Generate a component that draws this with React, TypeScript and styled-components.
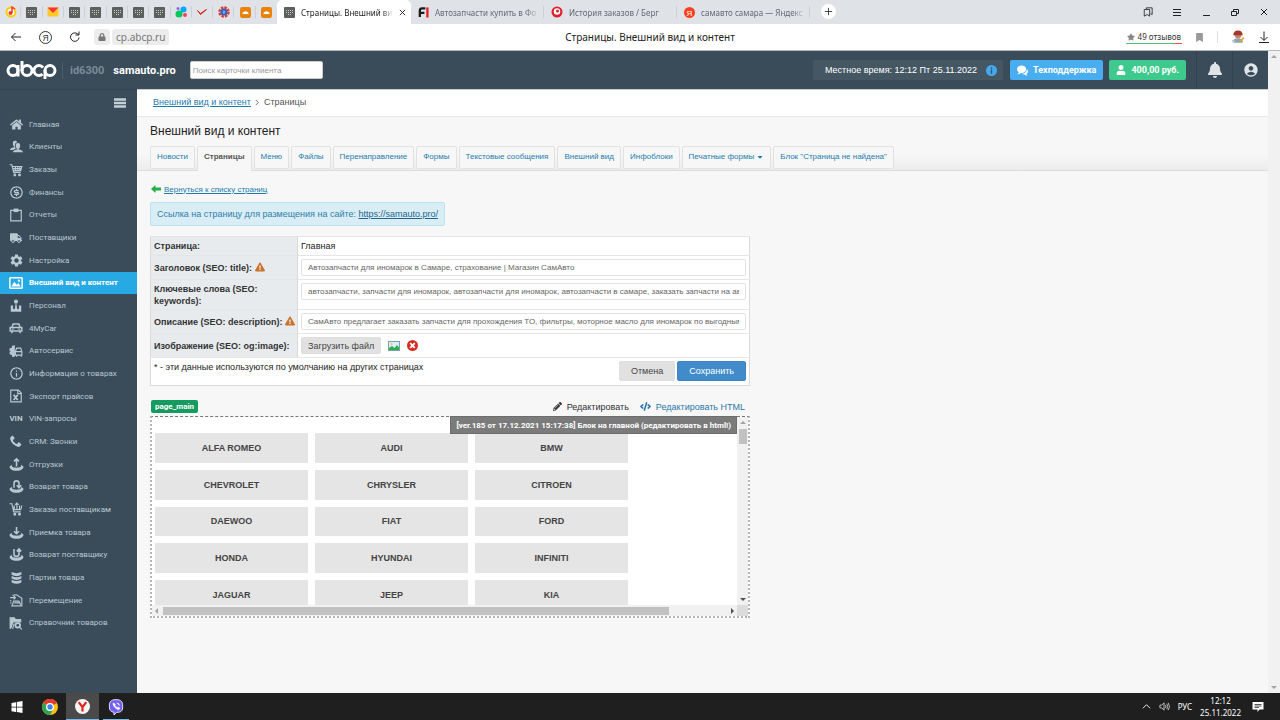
import React from "react";
import styled, { createGlobalStyle, css } from "styled-components";
import {
  FaHome, FaTruck, FaStar, FaBookmark, FaLock, FaBell, FaPencilAlt, FaCode, FaUser, FaCaretDown, FaExclamationTriangle,
} from "react-icons/fa";
import { ImUsers, ImPhone, ImBubbles2 } from "react-icons/im";
import { MdSettings, MdAccountCircle } from "react-icons/md";
import { RiMoneyDollarCircleLine, RiInformationLine } from "react-icons/ri";

const UI_FONT = `"Noto Sans", "Open Sans", sans-serif`;
const NARROW_FONT = `Roboto, "Liberation Sans", sans-serif`;
const TEXT_FONT = `"Liberation Sans", Arial, sans-serif`;

const Global = createGlobalStyle`
  *, *::before, *::after { box-sizing: border-box; }
  body { margin: 0; background: #f7f7f7; font-family: ${TEXT_FONT}; font-size: 9px; color: #222; }
  button { font: inherit; color: inherit; background: none; border: 0; padding: 0; margin: 0; }
  svg { display: block; flex: none; }
  h1, p, ul { margin: 0; padding: 0; }
  ul { list-style: none; }
`;

/* ---------- shell ---------- */

const Shell = styled.div`
  display: flex;
  flex-direction: column;
  min-height: 100vh;
`;

const TabStrip = styled.div`
  display: flex;
  height: 24px;
  background: #dfe2e7;
  font: 8px ${UI_FONT};
  color: #666a70;
`;

const PinnedTabs = styled.div`
  display: flex;
  width: 277px;
`;

const PinnedTab = styled.button`
  flex: 1;
  display: flex;
  align-items: center;
  justify-content: center;
  position: relative;
  &:not(:last-child)::after {
    content: "";
    position: absolute;
    right: 0;
    top: 6px;
    height: 12px;
    width: 1px;
    background: #cccfd4;
  }
`;

const PageTab = styled.button<{ $active?: boolean }>`
  display: flex;
  align-items: center;
  gap: 6px;
  width: 133px;
  padding: 0 5px 0 7px;
  text-align: left;
  ${(p) =>
    p.$active
      ? css`
          width: 134px;
          background: #fff;
          border-radius: 5px 5px 0 0;
          color: #222;
        `
      : css`
          background: linear-gradient(#cccfd4, #cccfd4) right center / 1px 12px no-repeat;
        `}
`;

const TabTitle = styled.span`
  flex: 1;
  min-width: 0;
  overflow: hidden;
  white-space: nowrap;
  mask-image: linear-gradient(90deg, #000 88%, transparent);
`;

const AddTab = styled.button`
  width: 15px;
  height: 15px;
  margin: 4px 0 0 11px;
  display: grid;
  place-items: center;
  border-radius: 50%;
  background: #fff;
`;

const WindowButtons = styled.div`
  display: flex;
  align-items: center;
  gap: 19px;
  margin-left: auto;
  padding-right: 11px;
  color: #222;
`;

const Toolbar = styled.div`
  display: flex;
  align-items: center;
  height: 27px;
  padding: 0 10px;
  background: #fff;
  border-bottom: 1px solid #b4b9be;
  font: 10px ${UI_FONT};
  color: #222;
`;

const ToolbarSide = styled.div<{ $end?: boolean }>`
  flex: 1;
  display: flex;
  align-items: center;
  justify-content: ${(p) => (p.$end ? "flex-end" : "flex-start")};
  gap: 13px;
`;

const NavButtons = styled.div`
  display: flex;
  align-items: center;
  gap: 17px;
`;

const Address = styled.div`
  display: flex;
  gap: 2px;
  align-items: center;
  color: #777;
`;

const Chip = styled.span`
  display: flex;
  align-items: center;
  height: 16px;
  padding: 0 4px;
  border-radius: 3px;
  background: #ececec;
`;

const WindowTitle = styled.div`
  padding-left: 20px;
`;

const Reviews = styled.a`
  display: flex;
  align-items: center;
  gap: 3px;
  height: 13px;
  padding: 0 1px;
  font-size: 8px;
  color: #333;
  text-decoration: none;
  border-bottom: 1px solid;
  border-image: linear-gradient(90deg, #4fc07a 85%, #f0524a 85%) 1;
  svg { color: #888; }
`;

const Rule = styled.span`
  width: 1px;
  height: 12px;
  background: #ddd;
`;

/* ---------- site ---------- */

const Viewport = styled.div`
  flex: 1;
  display: flex;
`;

const Site = styled.div`
  flex: 1;
  min-width: 0;
  display: flex;
  flex-direction: column;
`;

const PageScroll = styled.div`
  width: 12px;
  display: flex;
  flex-direction: column;
  justify-content: space-between;
  align-items: center;
  padding: 3px 0;
  background: #f1f1f1;
`;

const Header = styled.header`
  display: flex;
  align-items: center;
  height: 38px;
  padding-left: 6px;
  background: #3a4b59;
  color: #fff;
`;

const SiteId = styled.span`
  margin-left: 5px;
  padding: 2px 0 2px 7px;
  border-left: 1px solid #4d5e6b;
  font: bold 11px ${NARROW_FONT};
  color: #7b8d9b;
`;

const SiteName = styled.span`
  margin-left: 9px;
  font: bold 11px ${NARROW_FONT};
`;

const ClientSearch = styled.input`
  width: 133px;
  height: 18px;
  margin-left: 14px;
  padding: 0 2px;
  border: 1px solid #ccc;
  border-radius: 2px;
  font: 8px ${TEXT_FONT};
  &::placeholder { color: #999; opacity: 1; }
`;

const HeaderEnd = styled.div`
  display: flex;
  align-items: center;
  margin-left: auto;
  height: 100%;
`;

const LocalTime = styled.div`
  display: flex;
  align-items: center;
  gap: 9px;
  height: 20px;
  padding: 0 6px 0 12px;
  margin-right: 7px;
  background: #465764;
  border-radius: 2px;
`;

const HeaderButton = styled.button<{ $color: string }>`
  display: flex;
  align-items: center;
  gap: 5px;
  height: 20px;
  padding: 0 7px;
  margin-right: 6px;
  border-radius: 2px;
  background: ${(p) => p.$color};
  color: #fff;
  font: bold 9px ${NARROW_FONT};
`;

const HeaderIcon = styled.button`
  width: 36px;
  height: 100%;
  display: grid;
  place-items: center;
  border-left: 1px solid #33424f;
  color: #dfe4e8;
`;

const HeaderIcons = styled.div`
  display: flex;
  height: 100%;
  margin-left: 4px;
`;

const Columns = styled.div`
  flex: 1;
  display: flex;
`;

const Sidebar = styled.nav`
  width: 137px;
  background: #3a4b59;
  border-top: 1px solid #35444f;
`;

const Burger = styled.button`
  display: block;
  margin: 7px 11px 4px auto;
  color: #c3d0d8;
`;

const SideList = styled.ul`
  display: grid;
  grid-auto-rows: 1fr;
  height: 521px;
`;

const SideLink = styled.a<{ $active?: boolean }>`
  display: flex;
  align-items: center;
  gap: 6px;
  height: 100%;
  padding-left: 9px;
  font: 8px ${NARROW_FONT};
  color: #b9c8d1;
  text-decoration: none;
  white-space: nowrap;
  ${(p) =>
    p.$active &&
    css`
      background: #27a9e3;
      color: #fff;
      font-weight: bold;
    `}
`;

const SideIcon = styled.span`
  width: 14px;
  display: grid;
  place-items: center;
  font: bold 8px ${NARROW_FONT};
`;

const Main = styled.main`
  flex: 1;
  min-width: 0;
  background: #f7f7f7;
`;

const Breadcrumbs = styled.div`
  display: flex;
  align-items: center;
  gap: 4px;
  height: 28px;
  padding: 0 0 2px 16px;
  background: #fff;
  border-top: 1px solid #c9cdd1;
  border-bottom: 1px solid #e9e9e9;
  color: #555;
`;

const Link = styled.a`
  color: #1c7cad;
  text-decoration: underline;
`;

const SectionHead = styled.div`
  padding: 7px 13px 0;
  border-bottom: 1px solid #dcdcdc;
  background: linear-gradient(#f7f7f7 70%, #ececec);
`;

const Heading = styled.h1`
  font-size: 12px;
  line-height: 15px;
  font-weight: normal;
`;

const SectionTabs = styled.div`
  display: flex;
  align-items: flex-start;
  gap: 2px;
  height: 24px;
  margin-top: 7px;
`;

const SectionTab = styled.a<{ $active?: boolean }>`
  display: flex;
  align-items: center;
  gap: 2px;
  height: 23px;
  padding: 0 6px 2px;
  border: 1px solid #e2e2e2;
  border-radius: 2px;
  background: #f7f7f7;
  font-size: 8px;
  color: #1c7cad;
  text-decoration: none;
  white-space: nowrap;
  ${(p) =>
    p.$active &&
    css`
      height: 25px;
      padding-bottom: 5px;
      border-bottom: 0;
      border-radius: 2px 2px 0 0;
      color: #555;
      font-weight: bold;
    `}
`;

const Content = styled.div`
  max-width: 626px;
  padding: 12px 13px 0;
`;

const Back = styled.div`
  display: flex;
  align-items: center;
  gap: 3px;
  height: 12px;
  padding-left: 1px;
  font-size: 8px;
`;

const Notice = styled.div`
  width: fit-content;
  height: 24px;
  margin-top: 7px;
  padding: 0 6px;
  line-height: 22px;
  border: 1px solid #bce3ee;
  border-radius: 2px;
  background: #d9edf7;
  color: #2f7ea8;
  a { color: #1d668c; }
`;

const SeoTable = styled.table`
  width: 100%;
  margin-top: 10px;
  border-collapse: collapse;
  background: #fff;
  border: 1px solid #dadada;
`;

const Row = styled.tr<{ $h: number }>`
  height: ${(p) => p.$h}px;
  border-top: 1px solid #e6e6e6;
`;

const Label = styled.th`
  width: 147px;
  padding: 0 0 0 3px;
  border-right: 1px solid #dadada;
  background: #e7ebee;
  text-align: left;
  line-height: 12px;
  white-space: nowrap;
  color: #333;
  svg { display: inline-block; vertical-align: -1px; color: #c8722a; }
`;

const Cell = styled.td`
  padding: 3px;
  vertical-align: top;
  line-height: 12px;
`;

const Field = styled.input`
  display: block;
  width: 100%;
  height: 17px;
  padding: 0 6px 1px;
  border: 1px solid #e2e2e2;
  border-radius: 2px;
  font: 8px ${TEXT_FONT};
  color: #666;
`;

const Upload = styled.div`
  display: flex;
  align-items: center;
  gap: 7px;
`;

const Btn = styled.button<{ $primary?: boolean; $small?: boolean }>`
  height: ${(p) => (p.$small ? 17 : 20)}px;
  padding: 0 ${(p) => (p.$small ? 6 : 11)}px;
  border: 1px solid ${(p) => (p.$primary ? "#3d86c6" : "#dedede")};
  border-radius: 2px;
  background: ${(p) => (p.$primary ? "#428bca" : "#e1e1e1")};
  color: ${(p) => (p.$primary ? "#fff" : "#444")};
`;

const Footer = styled.div`
  display: flex;
  justify-content: space-between;
`;

const Actions = styled.div`
  display: flex;
  gap: 2px;
`;

const BlockBar = styled.div`
  display: flex;
  align-items: center;
  gap: 11px;
  height: 15px;
  margin-top: 13px;
  padding-right: 5px;
`;

const Tag = styled.span`
  margin-right: auto;
  margin-left: 1px;
  height: 13px;
  padding: 0 4px;
  line-height: 13px;
  border-radius: 2px;
  background: #159a60;
  color: #fff;
  font-family: ${NARROW_FONT};
  font-size: 8px;
  font-weight: bold;
`;

const EditButton = styled.button<{ $link?: boolean }>`
  display: flex;
  align-items: center;
  gap: 5px;
  color: ${(p) => (p.$link ? "#2b78a8" : "#333")};
`;

const Preview = styled.div`
  position: relative;
  display: grid;
  grid-template-columns: minmax(0, 1fr) 11px;
  grid-template-rows: 188px 11px;
  margin-top: 2px;
  border: 2px dotted #b5b5b5;
  border-top: 1px dashed #777;
  background: #fff;
`;

const VersionTip = styled.div`
  position: absolute;
  top: -1px;
  right: 11px;
  height: 18px;
  padding: 0 5px;
  line-height: 17px;
  background: #7b7b7b;
  border: 1px solid #6d6d6d;
  color: #fff;
  font-family: ${NARROW_FONT};
  font-size: 8px;
  font-weight: bold;
`;

const BrandClip = styled.div`
  overflow: hidden;
  padding: 16px 0 0 3px;
`;

const Brands = styled.div`
  display: grid;
  grid-template-columns: repeat(3, 153px);
  grid-template-rows: repeat(5, 1fr);
  gap: 7px;
  height: 177px;
`;

const Brand = styled.a`
  display: grid;
  place-items: center;
  background: #e5e5e5;
  color: #444;
  font-weight: bold;
  text-decoration: none;
`;

const ScrollTrack = styled.div<{ $vertical?: boolean }>`
  display: flex;
  flex-direction: ${(p) => (p.$vertical ? "column" : "row")};
  align-items: center;
  justify-content: space-between;
  gap: 3px;
  padding: ${(p) => (p.$vertical ? "3px 0" : "0 2px")};
  background: #f1f1f1;
`;

const Thumb = styled.span<{ $vertical?: boolean }>`
  background: #c1c1c1;
  ${(p) =>
    p.$vertical
      ? css`
          width: 8px;
          height: 15px;
          margin-bottom: auto;
        `
      : css`
          width: 506px;
          height: 8px;
          margin-right: auto;
        `}
`;

const Corner = styled.div`
  background: #dcdcdc;
`;

/* ---------- task bar ---------- */

const TaskBar = styled.footer`
  display: flex;
  align-items: center;
  height: 27px;
  background: #1f1f1f;
  color: #fff;
  font: 8px ${UI_FONT};
`;

const Task = styled.button<{ $state?: "active" | "open" }>`
  width: 33px;
  height: 100%;
  display: grid;
  place-items: center;
  background: ${(p) => (p.$state === "active" ? "#4a4a4a" : "none")};
  ${(p) =>
    p.$state &&
    css`
      background-image: linear-gradient(#76b9ed, #76b9ed);
      background-size: ${p.$state === "active" ? "100%" : "26px"} 1px;
      background-position: bottom center;
      background-repeat: no-repeat;
    `}
`;

const Tray = styled.div`
  display: flex;
  align-items: center;
  gap: 8px;
  margin-left: auto;
  padding-right: 16px;
`;

const Clock = styled.div`
  line-height: 12px;
  text-align: center;
  margin-right: 3px;
`;

/* ---------- drawings ---------- */

const Svg = ({ s = 14, box = 24, children }: { s?: number; box?: number; children: React.ReactNode }) => (
  <svg width={s} height={s} viewBox={`0 0 ${box} ${box}`} fill="none" stroke="currentColor" strokeWidth={2} aria-hidden="true">
    {children}
  </svg>
);

const Arrow = ({ dir, dim }: { dir: "up" | "down" | "left" | "right"; dim?: boolean }) => {
  const pts = { up: "0,4 3,1 6,4", down: "0,2 3,5 6,2", left: "4,0 1,3 4,6", right: "2,0 5,3 2,6" }[dir];
  return (
    <svg width="6" height="6" viewBox="0 0 6 6" aria-hidden="true">
      <polygon points={pts} fill={dim ? "#a3a3a3" : "#505050"} />
    </svg>
  );
};

const GridFav = () => (
  <svg width="11" height="11" viewBox="0 0 11 11" aria-hidden="true">
    <rect width="11" height="11" rx="1" fill="#5c5f5c" />
    <g fill="#c9ccc9">
      {[2, 4, 6, 8].map((x) => <rect key={x} x={x} y="3" width="1" height="1" />)}
      {[2, 4, 6, 8].map((x) => <rect key={x} x={x} y="5" width="1" height="1" />)}
      <rect x="4" y="7" width="1" height="1" />
      <rect x="6" y="7" width="1" height="1" />
    </g>
  </svg>
);

const MusicFav = () => (
  <Svg s={12}>
    <circle cx="12" cy="12" r="9" stroke="#ffcc00" strokeWidth="4" fill="#fff" />
    <circle cx="11" cy="14" r="4" fill="#f33" stroke="none" />
    <path d="M14 14V2l6 4" stroke="#f33" strokeWidth="3" />
  </Svg>
);

const MailFav = () => (
  <Svg s={12}>
    <rect x="1" y="3" width="22" height="18" fill="#ffc928" stroke="none" />
    <path d="M1 3h22L12 14z" fill="#f33" stroke="none" />
  </Svg>
);

const DotsFav = () => (
  <Svg s={12}>
    <circle cx="8" cy="16" r="7" fill="#04c95a" stroke="none" />
    <circle cx="17" cy="7" r="6" fill="#00aaff" stroke="none" />
    <circle cx="20" cy="18" r="4" fill="#ff4053" stroke="none" />
    <circle cx="6" cy="5" r="3" fill="#965eeb" stroke="none" />
  </Svg>
);

const CheckFav = () => (
  <Svg s={12}>
    <path d="M3 9l6 8L21 7 9 15z" fill="#d9231d" stroke="#d9231d" />
  </Svg>
);

const GearFav = () => (
  <Svg s={12}>
    <circle cx="12" cy="12" r="9" stroke="#e03a3a" strokeWidth="5" strokeDasharray="5 2" />
    <circle cx="12" cy="12" r="5" stroke="#2b62b5" strokeWidth="4" fill="#cfe0f5" />
    <path d="M8 12h8" stroke="#2b62b5" />
  </Svg>
);

const OrangeFav = () => (
  <Svg s={11}>
    <rect width="24" height="24" rx="5" fill="#e8820c" stroke="none" />
    <path d="M5 15c1-8 13-8 14 0z" fill="#fff" stroke="none" />
  </Svg>
);

const FiFav = () => (
  <Svg s={11}>
    <path d="M4 22V8q0-5 5-5h7M4 13h10" stroke="#1b1b1b" strokeWidth="5" />
    <path d="M20.500 1v22" stroke="#e31e24" strokeWidth="5" />
  </Svg>
);

const BergFav = () => (
  <Svg s={12}>
    <circle cx="12" cy="12" r="11" fill="#e3202a" stroke="none" />
    <circle cx="12" cy="11" r="6.500" fill="#fff" stroke="none" />
    <circle cx="13" cy="10" r="3" fill="#e3202a" stroke="none" />
  </Svg>
);

const YaFav = () => (
  <svg width="11" height="11" viewBox="0 0 22 22" aria-hidden="true">
    <circle cx="11" cy="11" r="11" fill="#fc3f1d" />
    <text x="11" y="17" textAnchor="middle" fontFamily="Liberation Sans" fontSize="16" fill="#fff">Я</text>
  </svg>
);

const Logo = () => (
  <svg width="51" height="19" viewBox="0 0 51 19" role="img" aria-label="abcp" fill="none" stroke="#fff" strokeWidth="3">
    <circle cx="7" cy="9.500" r="5" />
    <line x1="12" y1="4" x2="12" y2="15.500" />
    <line x1="16" y1="0" x2="16" y2="10" />
    <circle cx="21" cy="9.500" r="5" />
    <circle cx="33" cy="9.500" r="5" strokeDasharray="23.600 7.800" strokeDashoffset="-3.900" />
    <circle cx="44" cy="9.500" r="5" />
    <line x1="39" y1="9" x2="39" y2="18" />
  </svg>
);

const CartShape = () => (
  <>
    <path d="M1 3h4l3 13h12M6 6h16l-2 7H8M11 6v7M15 6v7M18.500 6v7M7 9.500h14" />
    <circle cx="10" cy="20.500" r="1.500" fill="currentColor" />
    <circle cx="18" cy="20.500" r="1.500" fill="currentColor" />
  </>
);

const TrayShape = ({ arrow }: { arrow: string }) => (
  <Svg s={15}>
    <path d="M5 12l-4 3v2c2 4 7 5 11 5s9-1 11-5v-2l-4-3c2 4-2 5-7 5s-9-1-7-5z" fill="currentColor" stroke="none" />
    <path d={arrow} strokeWidth="2.500" />
  </Svg>
);

const PictureIcon = () => (
  <Svg>
    <rect x="1.500" y="3" width="21" height="18" rx="1" strokeWidth="2.500" />
    <path d="M4 18l5-8 4 5 3-3 4 6z" fill="currentColor" stroke="none" />
    <circle cx="17" cy="8" r="2" fill="currentColor" stroke="none" />
  </Svg>
);

const MENU: { label: string; icon: React.ReactNode; active?: boolean }[] = [
  { label: "Главная", icon: <FaHome size={13} /> },
  { label: "Клиенты", icon: <ImUsers size={13} /> },
  { label: "Заказы", icon: <Svg><CartShape /></Svg> },
  { label: "Финансы", icon: <RiMoneyDollarCircleLine size={15} /> },
  {
    label: "Отчеты",
    icon: (
      <Svg>
        <path d="M3 4h18v18H3z" />
        <path d="M8 1h8v6H8z" fill="currentColor" stroke="none" />
      </Svg>
    ),
  },
  { label: "Поставщики", icon: <FaTruck size={12} /> },
  { label: "Настройка", icon: <MdSettings size={15} /> },
  { label: "Внешний вид и контент", icon: <PictureIcon />, active: true },
  {
    label: "Персонал",
    icon: (
      <Svg>
        <circle cx="12" cy="4.500" r="3.500" fill="currentColor" stroke="none" />
        <path d="M3 11h4v6h3l1-8h2l1 8h3v-6h4v11H3z" fill="currentColor" stroke="none" />
      </Svg>
    ),
  },
  {
    label: "4MyCar",
    icon: (
      <Svg>
        <path d="M5 11l2-6h10l2 6M2 11h20v6H2zM5 17v4M19 17v4" strokeWidth="2.500" />
        <path d="M5 14h3M16 14h3" />
      </Svg>
    ),
  },
  {
    label: "Автосервис",
    icon: (
      <Svg>
        <path d="M9 2v20M9 4H6v3L2 8v3h2v3H2v3l4 1v3h3" fill="currentColor" />
        <path d="M11 13l2-6h7l2 6v6H11zM13 19v3M21 19v3M11 13h11" />
      </Svg>
    ),
  },
  { label: "Информация о товарах", icon: <RiInformationLine size={15} /> },
  {
    label: "Экспорт прайсов",
    icon: (
      <Svg>
        <path d="M3 2h13l5 5v15H3zM15 2v6h6" />
        <path d="M8 10l7 9M15 10l-7 9" strokeWidth="3" />
      </Svg>
    ),
  },
  { label: "VIN-запросы", icon: "VIN" },
  { label: "CRM: Звонки", icon: <ImPhone size={12} /> },
  { label: "Отгрузки", icon: <TrayShape arrow="M12 15V3M8 7l4-4 4 4" /> },
  { label: "Возврат товара", icon: <TrayShape arrow="M8 14V7q0-4 4-4t4 4v5M12.500 10l3.500 4 3.500-4" /> },
  {
    label: "Заказы поставщикам",
    icon: (
      <Svg>
        <path d="M1 3h4l3 14h12M6 8l2 5h12l2-7M9 6v7M18 6v7M13.500 13V2M10.500 5l3-3 3 3" />
        <circle cx="10" cy="21" r="1.500" fill="currentColor" />
        <circle cx="18" cy="21" r="1.500" fill="currentColor" />
      </Svg>
    ),
  },
  { label: "Приемка товара", icon: <TrayShape arrow="M12 3v11M8 10l4 4 4-4" /> },
  { label: "Возврат поставщику", icon: <TrayShape arrow="M8 3v8q0 4 4 4t4-4V3M12.500 7L16 3l3.500 4" /> },
  {
    label: "Партии товара",
    icon: (
      <Svg s={13}>
        <path d="M3 2q9 4 18 0v5q-9 5-18 0zM3 9q9 5 18 0v5q-9 5-18 0zM3 16q9 5 18 0v5q-9 5-18 0z" fill="currentColor" stroke="none" />
      </Svg>
    ),
  },
  {
    label: "Перемещение",
    icon: (
      <Svg>
        <path d="M2 8h9M8 5l3 3-3 3" />
        <path d="M3 12v2M3 16v2M6 4l7-1 9 6v13H5l3-8h9l3 6M9 17h9" />
      </Svg>
    ),
  },
  {
    label: "Справочник товаров",
    icon: (
      <Svg>
        <path d="M2 3h7l2 3h9v4H7L3 21H2z" fill="currentColor" />
        <circle cx="15" cy="16" r="4" strokeWidth="3" />
        <path d="M18 19l4 4M6 22l3-9" />
      </Svg>
    ),
  },
];

const PINNED: [string, React.ReactNode][] = [
  ["Музыка", <MusicFav />], ["ABCP 1", <GridFav />], ["Почта", <MailFav />], ["ABCP 2", <GridFav />],
  ["ABCP 3", <GridFav />], ["ABCP 4", <GridFav />], ["ABCP 5", <GridFav />], ["ABCP 6", <GridFav />],
  ["Объявления", <DotsFav />], ["Проверка", <CheckFav />], ["Запчасти", <GearFav />],
  ["Облако 1", <OrangeFav />], ["Облако 2", <OrangeFav />],
];

const SECTIONS = [
  "Новости", "Страницы", "Меню", "Файлы", "Перенаправление", "Формы", "Текстовые сообщения",
  "Внешний вид", "Инфоблоки", "Печатные формы", 'Блок "Страница не найдена"',
];

const BRANDS = [
  "ALFA ROMEO", "AUDI", "BMW", "CHEVROLET", "CHRYSLER", "CITROEN", "DAEWOO", "FIAT", "FORD",
  "HONDA", "HYUNDAI", "INFINITI", "JAGUAR", "JEEP", "KIA",
];

/* ---------- page parts ---------- */

const BrowserChrome = () => (
  <>
    <TabStrip>
      <PinnedTabs>
        {PINNED.map(([name, icon]) => (
          <PinnedTab key={name} aria-label={name}>{icon}</PinnedTab>
        ))}
      </PinnedTabs>
      <PageTab $active>
        <GridFav />
        <TabTitle>Страницы. Внешний ви</TabTitle>
        <Svg s={7} box={8}><path d="M1 1l6 6M7 1L1 7" strokeWidth="1" /></Svg>
      </PageTab>
      <PageTab><FiFav /><TabTitle>Автозапчасти купить в Фо</TabTitle></PageTab>
      <PageTab><BergFav /><TabTitle>История заказов / Берг</TabTitle></PageTab>
      <PageTab><YaFav /><TabTitle>самавто самара — Яндекс</TabTitle></PageTab>
      <AddTab aria-label="Новая вкладка">
        <Svg s={9} box={10}><path d="M5 1v8M1 5h8" stroke="#333" strokeWidth="1" /></Svg>
      </AddTab>
      <WindowButtons>
        <button aria-label="Коллекции">
          <Svg s={10}><path d="M8 5V2h14v16l-4-2M3 6h13v16l-6-4-7 4z" /></Svg>
        </button>
        <button aria-label="Меню браузера"><Svg s={10} box={10}><path d="M1 2.500h8M1 5.500h8M1 8.500h8" strokeWidth="1" /></Svg></button>
        <button aria-label="Свернуть"><Svg s={10} box={10}><path d="M2 8.500h7" strokeWidth="1" /></Svg></button>
        <button aria-label="Развернуть"><Svg s={10} box={10}><path d="M1.500 4.500h5v4h-5zM3.500 4V2.500h5v4H7" strokeWidth="1" /></Svg></button>
        <button aria-label="Закрыть"><Svg s={10} box={10}><path d="M2 2l6 6M8 2L2 8" strokeWidth="1" /></Svg></button>
      </WindowButtons>
    </TabStrip>
    <Toolbar>
      <ToolbarSide>
        <NavButtons>
          <button aria-label="Назад"><Svg s={12}><path d="M22 12H3M11 4l-8 8 8 8" /></Svg></button>
          <button aria-label="Яндекс">
            <svg width="13" height="13" viewBox="0 0 26 26" aria-hidden="true">
              <circle cx="13" cy="13" r="12" fill="none" stroke="#333" strokeWidth="2" />
              <text x="13" y="19" textAnchor="middle" fontFamily="Liberation Sans" fontSize="17" fill="#333">Я</text>
            </svg>
          </button>
          <button aria-label="Обновить"><Svg s={12}><path d="M20 13a8.500 8.500 0 1 1-4-8l3 2M20 1v7h-7" /></Svg></button>
        </NavButtons>
        <Address>
          <Chip><FaLock size={8} /></Chip>
          <Chip>cp.abcp.ru</Chip>
        </Address>
      </ToolbarSide>
      <WindowTitle>Страницы. Внешний вид и контент</WindowTitle>
      <ToolbarSide $end>
        <Reviews href="#"><FaStar size={8} />49 отзывов</Reviews>
        <FaBookmark size={9} color="#999" />
        <Rule />
        <button aria-label="Профиль">
          <Svg s={14}>
            <path d="M4 17c4-4 12-4 16 0v5H4z" fill="#8ea2b8" stroke="none" />
            <circle cx="12" cy="8" r="6" fill="#c9846a" stroke="none" />
            <path d="M4 9q0-8 8-8t8 8z" fill="#a8352c" stroke="none" />
            <path d="M14 21l8-8" stroke="#e2a52b" strokeWidth="3" />
            <path d="M2 18l5 3" stroke="#b8c6d6" strokeWidth="3" />
          </Svg>
        </button>
        <button aria-label="Загрузки"><Svg s={12}><path d="M12 1v17M5 12l7 7 7-7M2 23h20" /></Svg></button>
      </ToolbarSide>
    </Toolbar>
  </>
);

const SiteHeader = () => (
  <Header>
    <Logo />
    <SiteId>id6300</SiteId>
    <SiteName>samauto.pro</SiteName>
    <ClientSearch placeholder="Поиск карточки клиента" aria-label="Поиск карточки клиента" />
    <HeaderEnd>
      <LocalTime>
        Местное время: 12:12 Пт 25.11.2022
        <Svg s={11}>
          <circle cx="12" cy="12" r="12" fill="#45a9ee" stroke="none" />
          <path d="M12 5v3M12 10v9" stroke="#34526b" strokeWidth="3" />
        </Svg>
      </LocalTime>
      <HeaderButton $color="#49aef0"><ImBubbles2 size={11} />Техподдержка</HeaderButton>
      <HeaderButton $color="#3fca8d"><FaUser size={10} />400,00 руб.</HeaderButton>
      <HeaderIcons>
        <HeaderIcon aria-label="Уведомления"><FaBell size={16} /></HeaderIcon>
        <HeaderIcon aria-label="Аккаунт"><MdAccountCircle size={16} /></HeaderIcon>
      </HeaderIcons>
    </HeaderEnd>
  </Header>
);

const SeoForm = () => (
  <SeoTable>
    <tbody>
      <Row $h={19}>
        <Label scope="row">Страница:</Label>
        <Cell>Главная</Cell>
      </Row>
      <Row $h={24}>
        <Label scope="row"><label htmlFor="seo-title">Заголовок (SEO: title): <FaExclamationTriangle size={10} /></label></Label>
        <Cell><Field id="seo-title" defaultValue="Автозапчасти для иномарок в Самаре, страхование | Магазин СамАвто" /></Cell>
      </Row>
      <Row $h={30}>
        <Label scope="row"><label htmlFor="seo-keys">Ключевые слова (SEO:<br />keywords):</label></Label>
        <Cell><Field id="seo-keys" defaultValue="автозапчасти, запчасти для иномарок, автозапчасти для иномарок, автозапчасти в самаре, заказать запчасти на авто" /></Cell>
      </Row>
      <Row $h={24}>
        <Label scope="row"><label htmlFor="seo-desc">Описание (SEO: description): <FaExclamationTriangle size={10} /></label></Label>
        <Cell><Field id="seo-desc" defaultValue="СамАвто предлагает заказать запчасти для прохождения ТО, фильтры, моторное масло для иномарок по выгодным ценам" /></Cell>
      </Row>
      <Row $h={24}>
        <Label scope="row">Изображение (SEO: og:image):</Label>
        <Cell>
          <Upload>
            <Btn $small>Загрузить файл</Btn>
            <Svg s={12}>
              <rect x="1" y="3" width="22" height="18" fill="#dceefb" stroke="#7f9db0" />
              <path d="M2 20v-4l6-4 5 4 5-6 4 5v5z" fill="#2fae4e" stroke="none" />
              <circle cx="7" cy="8" r="2" fill="#f4c430" stroke="none" />
            </Svg>
            <button aria-label="Удалить изображение">
              <Svg s={11}>
                <circle cx="12" cy="12" r="12" fill="#d32f24" stroke="none" />
                <path d="M7 7l10 10M17 7L7 17" stroke="#fff" strokeWidth="4" />
              </Svg>
            </button>
          </Upload>
        </Cell>
      </Row>
      <Row $h={28}>
        <Cell colSpan={2}>
          <Footer>
            <span>* - эти данные используются по умолчанию на других страницах</span>
            <Actions>
              <Btn>Отмена</Btn>
              <Btn $primary>Сохранить</Btn>
            </Actions>
          </Footer>
        </Cell>
      </Row>
    </tbody>
  </SeoTable>
);

const BlockPreview = () => (
  <>
    <BlockBar>
      <Tag>page_main</Tag>
      <EditButton><FaPencilAlt size={9} />Редактировать</EditButton>
      <EditButton $link><FaCode size={11} />Редактировать HTML</EditButton>
    </BlockBar>
    <Preview>
      <BrandClip>
        <Brands>{BRANDS.map((b) => <Brand key={b} href="#">{b}</Brand>)}</Brands>
      </BrandClip>
      <ScrollTrack $vertical><Arrow dir="up" dim /><Thumb $vertical /><Arrow dir="down" /></ScrollTrack>
      <ScrollTrack><Arrow dir="left" dim /><Thumb /><Arrow dir="right" /></ScrollTrack>
      <Corner />
      <VersionTip>[ver.185 от 17.12.2021 15:17:38] Блок на главной (редактировать в html!)</VersionTip>
    </Preview>
  </>
);

const WindowsTaskBar = () => (
  <TaskBar>
    <Task aria-label="Пуск">
      <Svg s={12}><path d="M1 4l9-1.500v9H1zM11.500 2L23 0v11.500H11.500zM1 13h9v9L1 20.500zM11.500 13H23v11l-11.500-2z" fill="#fff" stroke="none" /></Svg>
    </Task>
    <Task aria-label="Chrome">
      <Svg s={16}>
        <circle cx="12" cy="12" r="12" fill="#fbc116" stroke="none" />
        <path d="M12 12L1.600 6a12 12 0 0 1 20.800 0z" fill="#e33b2e" stroke="none" />
        <path d="M12 12L1.600 6A12 12 0 0 0 12 24l5-9z" fill="#31a350" stroke="none" />
        <circle cx="12" cy="12" r="5" fill="#3e82f1" stroke="#fff" />
      </Svg>
    </Task>
    <Task aria-label="Яндекс Браузер" $state="active">
      <Svg s={15}>
        <circle cx="12" cy="12" r="12" fill="#f4f4f4" stroke="none" />
        <path d="M6 5l6 8 6-8M12 12v8" stroke="#e2231a" strokeWidth="3.500" />
      </Svg>
    </Task>
    <Task aria-label="Viber" $state="open">
      <Svg s={16}>
        <path d="M12 1c8 0 10 3 10 10s-2 9-9 9l-4 4v-4c-5-1-7-3-7-9 0-7 2-10 10-10z" fill="#7360f2" stroke="#e8e4ff" strokeWidth="1.500" />
        <path d="M8 6c-2 2 3 9 8 10l2-2-3-2-1 1c-2-1-3-2-4-4l1-1zM13 6q4 0 4 4" fill="#fff" stroke="#fff" strokeWidth="1" />
      </Svg>
    </Task>
    <Tray>
      <Svg s={9} box={10}><path d="M1 7l4-4 4 4" strokeWidth="1" /></Svg>
      <Svg s={11}><path d="M2 9h4l5-5v16l-5-5H2zM14 9q2 3 0 6M17 6q4 6 0 12M20 4q6 8 0 16" strokeWidth="1.500" /></Svg>
      <span>РУС</span>
      <Clock>12:12<br />25.11.2022</Clock>
      <Svg s={12}><path d="M1 2h22v15h-8l-4 5v-5H1z" fill="#fff" stroke="none" /><path d="M5 7h14M5 10h14M5 13h9" stroke="#222" strokeWidth="1.500" /></Svg>
    </Tray>
  </TaskBar>
);

export default function App() {
  return (
    <Shell>
      <Global />
      <BrowserChrome />
      <Viewport>
        <Site>
          <SiteHeader />
          <Columns>
            <Sidebar>
              <Burger aria-label="Свернуть меню">
                <Svg s={12} box={12}><path d="M0 2.500h12M0 6h12M0 9.500h12" strokeWidth="2.700" /></Svg>
              </Burger>
              <SideList>
                {MENU.map((m) => (
                  <li key={m.label}>
                    <SideLink href="#" $active={m.active}><SideIcon>{m.icon}</SideIcon>{m.label}</SideLink>
                  </li>
                ))}
              </SideList>
            </Sidebar>
            <Main>
              <Breadcrumbs>
                <Link href="#">Внешний вид и контент</Link>
                <Svg s={5} box={6}><path d="M1 0l3 3-3 3" strokeWidth="1" /></Svg>
                Страницы
              </Breadcrumbs>
              <SectionHead>
                <Heading>Внешний вид и контент</Heading>
                <SectionTabs>
                  {SECTIONS.map((s) => (
                    <SectionTab key={s} href="#" $active={s === "Страницы"}>
                      {s}
                      {s === "Печатные формы" && <FaCaretDown size={8} />}
                    </SectionTab>
                  ))}
                </SectionTabs>
              </SectionHead>
              <Content>
                <Back>
                  <Svg s={10} box={20}><path d="M0 10l9-8v5h11v6H9v5z" fill="#27ae4b" stroke="none" /></Svg>
                  <Link href="#">Вернуться к списку страниц</Link>
                </Back>
                <Notice>
                  Ссылка на страницу для размещения на сайте: <Link href="#">https://samauto.pro/</Link>
                </Notice>
                <SeoForm />
                <BlockPreview />
              </Content>
            </Main>
          </Columns>
        </Site>
        <PageScroll><Arrow dir="up" dim /><Arrow dir="down" dim /></PageScroll>
      </Viewport>
      <WindowsTaskBar />
    </Shell>
  );
}
